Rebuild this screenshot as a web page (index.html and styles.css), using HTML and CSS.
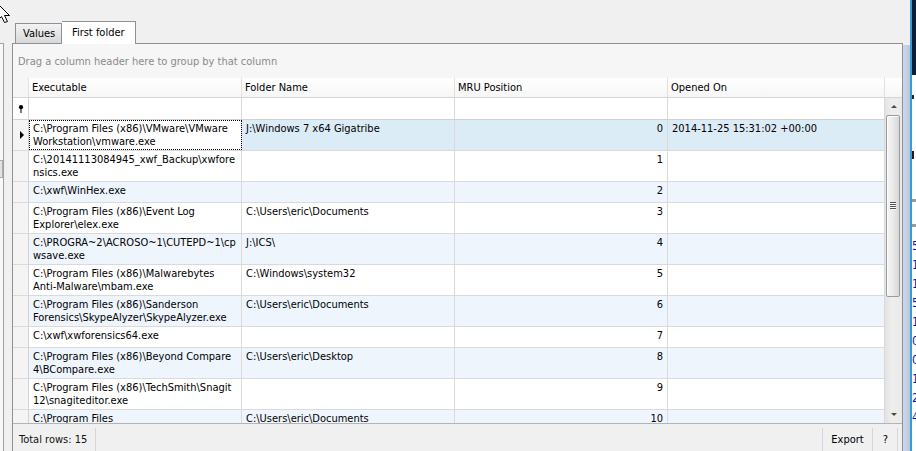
FILE: index.html
```html
<!DOCTYPE html>
<html>
<head>
<meta charset="utf-8">
<link rel="stylesheet" href="styles.css">
</head>
<body>
<div class="screen">
  <div class="left-sliver">
    <div class="side-panel"><div class="side-thumb"></div></div>
  </div>
  <div class="tabctl">
    <div class="tabstrip">
      <div class="tab">Values</div>
      <div class="tab active">First folder</div>
    </div>
    <div class="page">
      <div class="grouppanel">Drag a column header here to group by that column</div>
      <div class="hdr">
        <div class="hc ind"></div>
        <div class="hc">Executable</div>
        <div class="hc">Folder Name</div>
        <div class="hc">MRU Position</div>
        <div class="hc">Opened On</div>
        <div class="hc sbh"></div>
      </div>
      <div class="gbody">
        <div class="rows">
          <div class="row filter">
            <div class="c ind"><svg class="pin" width="6" height="8" viewBox="0 0 6 8"><circle cx="3" cy="2.2" r="2.1" fill="#000"/><rect x="2.5" y="3.5" width="1" height="4.5" fill="#000"/></svg></div>
            <div class="c"></div><div class="c"></div><div class="c"></div><div class="c"></div>
          </div>
          <div class="row tall sel">
            <div class="c ind"><span class="tri"></span></div>
            <div class="c focus">C:\Program Files (x86)\VMware\VMware<br>Workstation\vmware.exe</div>
            <div class="c">J:\Windows 7 x64 Gigatribe</div>
            <div class="c num">0</div>
            <div class="c">2014-11-25 15:31:02 +00:00</div>
          </div>
          <div class="row tall">
            <div class="c ind"></div>
            <div class="c">C:\20141113084945_xwf_Backup\xwfore<br>nsics.exe</div>
            <div class="c"></div>
            <div class="c num">1</div>
            <div class="c"></div>
          </div>
          <div class="row alt">
            <div class="c ind"></div>
            <div class="c">C:\xwf\WinHex.exe</div>
            <div class="c"></div>
            <div class="c num">2</div>
            <div class="c"></div>
          </div>
          <div class="row tall">
            <div class="c ind"></div>
            <div class="c">C:\Program Files (x86)\Event Log<br>Explorer\elex.exe</div>
            <div class="c">C:\Users\eric\Documents</div>
            <div class="c num">3</div>
            <div class="c"></div>
          </div>
          <div class="row tall alt">
            <div class="c ind"></div>
            <div class="c">C:\PROGRA~2\ACROSO~1\CUTEPD~1\cp<br>wsave.exe</div>
            <div class="c">J:\ICS\</div>
            <div class="c num">4</div>
            <div class="c"></div>
          </div>
          <div class="row tall">
            <div class="c ind"></div>
            <div class="c">C:\Program Files (x86)\Malwarebytes<br>Anti-Malware\mbam.exe</div>
            <div class="c">C:\Windows\system32</div>
            <div class="c num">5</div>
            <div class="c"></div>
          </div>
          <div class="row tall alt">
            <div class="c ind"></div>
            <div class="c">C:\Program Files (x86)\Sanderson<br>Forensics\SkypeAlyzer\SkypeAlyzer.exe</div>
            <div class="c">C:\Users\eric\Documents</div>
            <div class="c num">6</div>
            <div class="c"></div>
          </div>
          <div class="row">
            <div class="c ind"></div>
            <div class="c">C:\xwf\xwforensics64.exe</div>
            <div class="c"></div>
            <div class="c num">7</div>
            <div class="c"></div>
          </div>
          <div class="row tall alt">
            <div class="c ind"></div>
            <div class="c">C:\Program Files (x86)\Beyond Compare<br>4\BCompare.exe</div>
            <div class="c">C:\Users\eric\Desktop</div>
            <div class="c num">8</div>
            <div class="c"></div>
          </div>
          <div class="row tall">
            <div class="c ind"></div>
            <div class="c">C:\Program Files (x86)\TechSmith\Snagit<br>12\snagiteditor.exe</div>
            <div class="c"></div>
            <div class="c num">9</div>
            <div class="c"></div>
          </div>
          <div class="row short-last alt">
            <div class="c ind"></div>
            <div class="c">C:\Program Files</div>
            <div class="c">C:\Users\eric\Documents</div>
            <div class="c num">10</div>
            <div class="c"></div>
          </div>
        </div>
        <div class="vscroll">
          <div class="sbtn"><span class="arr up"></span></div>
          <div class="thumb"><span class="grip"></span></div>
          <div class="sfill"></div>
          <div class="sbtn"><span class="arr down"></span></div>
        </div>
      </div>
      <div class="status">
        <div class="sitem first">Total rows: 15</div>
        <div class="sspace"></div>
        <div class="sitem link">Export</div>
        <div class="sitem link q">?</div>
      </div>
    </div>
  </div>
  <div class="right-strip">
    <div class="rs-b"><div class="rs-b-top"></div><div class="rs-b-bot"></div></div>
    <div class="rs-c"></div>
    <div class="rs-d">
      <div class="navy"></div>
      <div class="mark m1"></div>
      <div class="mark m2"></div>
      <div class="bar b1"></div>
      <div class="bar b2"></div>
      <div class="digits">5<br>1<br>1<br>5<br>1<br>0<br>0<br>1<br>2<br>4</div>
    </div>
  </div>
  <svg class="cursor" width="14" height="26" viewBox="0 0 14 26"><polygon points="-2.5,3.5 -2.5,20.5 1.5,16.5 4.5,22.5 7.5,21.5 4.5,15.5 9.5,15.5" fill="#fff" stroke="#000" stroke-width="1"/></svg>
</div>
</body>
</html>
```

FILE: styles.css
```css
* { box-sizing: border-box; }
html, body { margin: 0; padding: 0; }
body {
  width: 916px;
  height: 451px;
  overflow: hidden;
  background: #f0f0f0;
  font-family: "DejaVu Sans Condensed", "DejaVu Sans", "Liberation Sans", sans-serif;
  font-stretch: condensed;
  font-size: 11px;
  color: #000;
}
.screen {
  position: relative;
  display: flex;
  width: 916px;
  height: 451px;
  overflow: hidden;
}

/* left sliver of neighbouring panel */
.left-sliver { width: 12px; flex: none; padding-top: 43px; }
.side-panel {
  width: 4px;
  height: 100%;
  border-top: 1px solid #a0a0a0;
  border-right: 1px solid #a0a0a0;
  background: #f8f8f8;
  display: flex;
  flex-direction: column;
}
.side-thumb {
  margin-top: 116px;
  width: 3px;
  height: 18px;
  background: #e2e2e2;
  border: 1px solid #acacac;
  border-left: none;
}

/* tab control */
.tabctl { width: 891px; flex: none; display: flex; flex-direction: column; }
.tabstrip { height: 43px; flex: none; display: flex; align-items: flex-end; padding-left: 3px; }
.tab {
  width: 47px;
  height: 20px;
  border: 1px solid #8e9097;
  border-bottom: none;
  background: linear-gradient(#f3f3f3, #e6e6e6 50%, #d9d9d9);
  padding-left: 7px;
  line-height: 20px;
  white-space: nowrap;
}
.tab.active {
  position: relative;
  z-index: 1;
  width: 74px;
  height: 23px;
  margin-bottom: -1px;
  border-left: none;
  background: #fff;
  padding-left: 10px;
  line-height: 22px;
}
.page {
  flex: 1;
  border: 1px solid #8e9097;
  border-bottom: none;
  display: flex;
  flex-direction: column;
  background: #fff;
}
.grouppanel {
  height: 34px;
  flex: none;
  background: #f6f6f6;
  color: #8a8a8a;
  padding-left: 5px;
  line-height: 36px;
}

/* grid header */
.hdr {
  display: grid;
  grid-template-columns: 16px 213px 213px 213px 217px 17px;
  height: 20px;
  flex: none;
  border-bottom: 1px solid #d5d5d5;
  background: linear-gradient(#ffffff, #f6f6f6);
}
.hc {
  border-right: 1px solid #e0e0e0;
  padding-left: 3px;
  line-height: 19px;
  white-space: nowrap;
  overflow: hidden;
}
.hc.ind { background: #f6f6f6; }
.hc.sbh { border-right: none; }

/* grid body */
.gbody {
  display: flex;
  height: 326px;
  flex: none;
  border-bottom: 1px solid #b4b4b4;
}
.rows { width: 872px; flex: none; overflow: hidden; display: flex; flex-direction: column; }
.row {
  display: grid;
  grid-template-columns: 16px 213px 213px 213px 217px;
  height: 21px;
  flex: none;
  border-bottom: 1px solid #dadada;
}
.row.tall { height: 31px; }
.row.short-last { height: 31px; }
.row.filter { height: 22px; border-bottom-color: #d2d2d2; }
.row.alt { background: #eef5fd; }
.row.sel { background: #dcecf7; }
.c {
  border-right: 1px solid #dadada;
  padding: 2px 4px 0 4px;
  line-height: 13px;
  white-space: nowrap;
  overflow: hidden;
}
.c.num { text-align: right; }
.c.ind {
  background: #f4f4f4;
  border-right-color: #d2d2d2;
  padding: 0;
  display: flex;
  align-items: center;
  justify-content: center;
}
.row.filter .c.ind { background: #fff; }
.c.focus {
  background: #fff;
  outline: 1px dotted #000;
  outline-offset: -1px;
}
.tri {
  width: 0;
  height: 0;
  border-left: 4px solid #000;
  border-top: 4px solid transparent;
  border-bottom: 4px solid transparent;
  margin-left: 2px;
}
.pin { display: block; }

/* scrollbar */
.vscroll {
  width: 17px;
  flex: none;
  display: flex;
  flex-direction: column;
  background: linear-gradient(to right, #e3e3e3, #eeeeee 40%, #eaeaea);
}
.sbtn {
  height: 17px;
  flex: none;
  display: flex;
  align-items: center;
  justify-content: center;
}
.arr { width: 0; height: 0; border-left: 3px solid transparent; border-right: 3px solid transparent; margin-left: 1px; }
.arr.up { border-bottom: 3px solid #4a4a4a; }
.arr.down { border-top: 3px solid #4a4a4a; }
.thumb {
  height: 182px;
  width: 14px;
  margin-left: 1px;
  flex: none;
  border: 1px solid #9b9b9b;
  border-radius: 2px;
  background: linear-gradient(to right, #f6f6f6, #e9e9e9 50%, #d7d7d7);
  box-shadow: inset 1px 1px 0 #fdfdfd;
  display: flex;
  align-items: center;
  justify-content: center;
}
.grip {
  width: 6px;
  height: 8px;
  background: repeating-linear-gradient(#555 0 1px, #fafafa 1px 2px);
}
.sfill { flex: 1; }

/* status bar */
.status {
  flex: 1;
  display: flex;
  background: #f0f0f0;
  padding-top: 4px;
}
.sitem { line-height: 24px; white-space: nowrap; }
.sitem.first { padding: 0 8px 0 6px; border-right: 1px solid #d6d6d6; color: #111; }
.sspace { flex: 1; }
.sitem.link { padding: 0 8px; border-left: 1px solid #d6d6d6; }
.sitem.q { padding: 0 9px 0 10px; border-right: 1px solid #d6d6d6; margin-right: 4px; }

/* right strip: part of another window */
.right-strip { width: 13px; flex: none; display: flex; }
.rs-b { width: 7px; display: flex; flex-direction: column; }
.rs-b-top { height: 45px; }
.rs-b-bot { flex: 1; background: linear-gradient(to right, #cfd9e6, #b5c9e1); }
.rs-c { width: 2px; background: #3a9ad9; }
.rs-d { width: 4px; background: #fff; display: flex; flex-direction: column; overflow: hidden; }
.rs-d .navy { height: 75px; flex: none; background: #0f1c34; }
.rs-d .mark { width: 2px; flex: none; background: #222; }
.rs-d .m1 { height: 4px; margin-top: 20px; }
.rs-d .m2 { height: 8px; margin-top: 52px; background: #3a1010; }
.rs-d .bar { height: 3px; flex: none; background: #9a9a9a; }
.rs-d .b1 { margin-top: 40px; }
.rs-d .b2 { margin-top: 22px; }
.rs-d .digits {
  margin-top: 10px;
  color: #1010b8;
  font-size: 12px;
  line-height: 19px;
}

.cursor { position: absolute; left: 0; top: 0; overflow: visible; }
```
